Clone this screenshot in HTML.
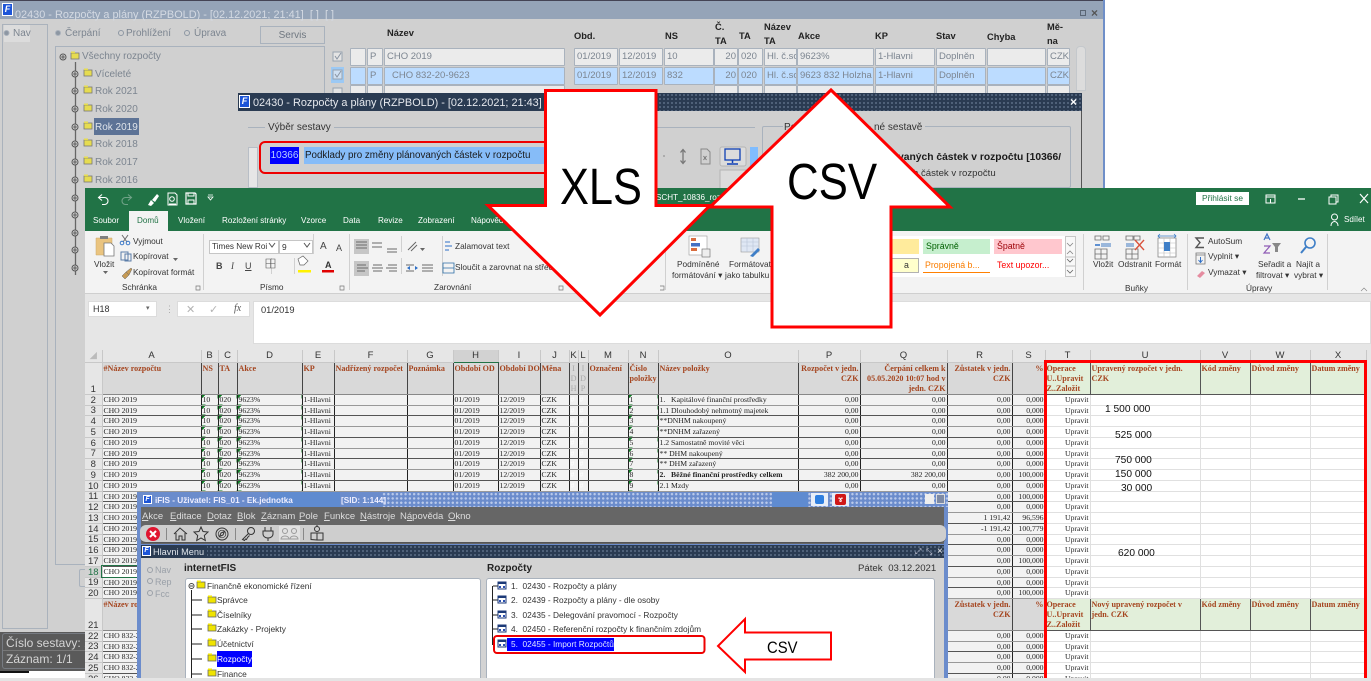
<!DOCTYPE html>
<html><head><meta charset="utf-8"><title>Rozpočty</title>
<style>
html,body{margin:0;padding:0;width:1371px;height:681px;overflow:hidden;background:#fff;font-family:"Liberation Sans",sans-serif}
a{position:absolute;white-space:nowrap;line-height:10px;font-size:9.5px;color:#222}
div{position:absolute}
svg{position:absolute;left:0;top:0;overflow:visible}
.bk a{color:#7c8590}
.bk a.h{color:#222;font-weight:bold;font-size:9.3px}
.c{background:#ebebeb;border:1px solid #a9b2bd;border-radius:1px;box-sizing:border-box;height:18px;overflow:hidden;font-size:9.5px;line-height:16px;color:#7c8590;padding-left:2px;white-space:nowrap}
.c.b{background:#bcdcff}
.dot{background-color:#2a3b52;background-image:radial-gradient(circle,#586b83 .9px,transparent 1.1px);background-size:4px 4px}
.dotb{background-color:#6b8ccc;background-image:radial-gradient(circle,#b9c9ea 1.1px,transparent 1.3px);background-size:4.3px 4.3px}
.r a{font-size:8.3px;color:#333}
.w a{color:#fff;font-size:8.1px}
table{position:absolute;left:85px;top:350px;border-collapse:collapse;table-layout:fixed;width:1281px;font:7.7px/9px "Liberation Serif",serif;color:#222}
tr{height:11px}
tr:nth-child(4n){height:10px}
tr.ch{height:12px}
tr.hd{height:31px}
tr.h2{height:32px}
th{font:9.5px/9px "Liberation Sans",sans-serif;color:#333;background:#e6e6e6;border-right:1px solid #c8c8c8;border-bottom:1px solid #c8c8c8;padding:0;text-align:center;overflow:hidden;vertical-align:bottom}
td{padding:0 1px;background-color:#f2f2f2;border-right:1px solid #222;border-bottom:1px solid #555;overflow:hidden;white-space:nowrap;vertical-align:middle}
tr:nth-child(odd) td{border-bottom-color:#999}
td:nth-child(n+17):nth-child(-n+21){text-align:right}
tr:nth-child(n) td:nth-child(n+21){background:#fff;border-color:#e0e0e0}
td:nth-child(3),td:nth-child(4),td:nth-child(5),td:nth-child(15){background-image:linear-gradient(135deg,#0a7a20 3px,transparent 3px)}
td:nth-child(12),td:nth-child(13){color:#fff}
.ch th{background:#e6e6e6;vertical-align:middle;font-size:9.5px}
.ch th.act{background:#d2d2d2;border-bottom:1px solid #217346}
.hd td,.h2 td{white-space:normal;vertical-align:top;font-weight:bold;font-size:8.1px;color:#a5451f;line-height:10px;background:#d9d9d9;background-image:none;border-bottom:1px solid #888;border-right:1px solid #444;padding-top:1px}
.hd td:nth-child(9),.hd td:nth-child(10){white-space:nowrap}
tr.hd td:nth-child(n+21),tr.h2 td:nth-child(n+21){background:#e2efda;text-align:left;border-color:#555}
.hd td:nth-child(12),.hd td:nth-child(13){color:#aaa;text-align:center;font-weight:normal}
.n{font-size:10.2px;color:#111}
.mn a{color:#ddd;font-size:9.5px;top:512px}
.tr a{font-size:8.3px;color:#333}
.tl a{font-size:8.4px;color:#333}
</style></head><body>
<div style="left:0;top:0;width:1371px;height:681px;overflow:hidden">

<!-- back window -->
<div class="bk" style="left:0;top:0;width:1105px;height:681px">
<div style="left:0;top:0;width:1105px;height:672px;background:#d0d0d0"></div>
<div style="left:0;top:0;width:1105px;height:19px;background:#95a4b8;border-top:1px solid #445;box-sizing:border-box"></div>
<div style="left:1103px;top:0;width:2px;height:188px;background:#6f8fc8"></div>
<div style="left:2px;top:3px;width:11px;height:13px;background:#1d55d8;border:1px solid #fff;box-sizing:border-box;color:#fff;font:italic bold 9px/11px 'Liberation Sans',sans-serif;text-align:center">F</div>
<a style="left:15px;top:10px;color:#d4dae3;font-size:10.9px">02430 - Rozpočty a plány (RZPBOLD) - [02.12.2021; 21:41]&nbsp; [ ]&nbsp; [ ]</a>
<div style="left:1080px;top:10px;width:6px;height:6px;border:1px solid #5a6675;box-sizing:border-box"></div><a style="left:1091px;top:8px;color:#555;font-size:12px;font-weight:bold">×</a>

<div style="left:2px;top:24px;width:46px;height:605px;border:1px solid #aab2bc;box-sizing:border-box"></div>
<div style="left:4px;top:25px;width:26px;height:17px;background:#dcdcdc"></div>
<a style="left:13px;top:29px;font-size:10px">Nav</a>
<a style="left:65px;top:29px;font-size:10px">Čerpání</a>
<a style="left:126px;top:29px;font-size:10px">Prohlížení</a>
<a style="left:194px;top:29px;font-size:10px">Úprava</a>
<div style="left:260px;top:26px;width:65px;height:18px;border:1px solid #a9b2bd;box-sizing:border-box;text-align:center;font-size:10px;line-height:17px;color:#6f7780">Servis</div>
<div style="left:55px;top:46px;width:270px;height:519px;border:1px solid #a9b2bd;box-sizing:border-box"></div>
<div style="left:94px;top:118px;width:45px;height:17px;background:#5d7396"></div>
<a style="left:82px;top:52px;font-size:10px">Všechny rozpočty</a>
<a style="left:95px;top:70px;font-size:10px">Víceleté</a>
<a style="left:95px;top:87px;font-size:10px">Rok 2021</a>
<a style="left:95px;top:105px;font-size:10px">Rok 2020</a>
<a style="left:95px;top:123px;font-size:10px;color:#dfe4ea">Rok 2019</a>
<a style="left:95px;top:140px;font-size:10px">Rok 2018</a>
<a style="left:95px;top:158px;font-size:10px">Rok 2017</a>
<a style="left:95px;top:176px;font-size:10px">Rok 2016</a>
<svg width="1105" height="300" fill="none">
<defs><g id="fd"><rect x="0" y="-3" width="8" height="6" fill="#e6dc50" stroke="#777" stroke-width=".8"/><rect x="0" y="-4.5" width="4" height="1.6" fill="#e6dc50"/></g>
<g id="pl"><circle r="3" stroke="#555" fill="#d0d0d0"/><path d="M-2 0h4M0-2v4" stroke="#444" stroke-width=".8"/></g></defs>
<circle cx="6.5" cy="33" r="2.5" fill="#8d97a3" stroke="#aab2bc"/><circle cx="58" cy="33" r="2.5" fill="#8d97a3" stroke="#aab2bc"/><circle cx="121" cy="33" r="2.5" stroke="#8d97a3"/><circle cx="187" cy="33" r="2.5" stroke="#8d97a3"/>
<path d="M75.500 62V275" stroke="#666" stroke-width="1.300"/>
<use href="#pl" x="63" y="57"/><use href="#fd" x="71" y="56"/>
<use href="#pl" x="75" y="74"/><use href="#fd" x="84" y="73"/>
<use href="#pl" x="75" y="91"/><use href="#fd" x="84" y="90"/>
<use href="#pl" x="75" y="109"/><use href="#fd" x="84" y="108"/>
<use href="#pl" x="75" y="127"/><use href="#fd" x="84" y="126"/>
<use href="#pl" x="75" y="144"/><use href="#fd" x="84" y="143"/>
<use href="#pl" x="75" y="162"/><use href="#fd" x="84" y="161"/>
<use href="#pl" x="75" y="180"/><use href="#fd" x="84" y="179"/>
<use href="#pl" x="75" y="198"/><use href="#pl" x="75" y="215"/><use href="#pl" x="75" y="233"/><use href="#pl" x="75" y="250"/><use href="#pl" x="75" y="268"/>
<rect x="333" y="52" width="9" height="9" fill="#e4e4e4" stroke="#98a3b0"/><path d="M335 56l2 3 4-6" stroke="#8a95a3"/>
<rect x="331" y="67" width="13" height="16" fill="#9cc9f4"/><rect x="333" y="70" width="9" height="9" fill="#cfe0f2" stroke="#98a3b0"/><path d="M335 74l2 3 4-6" stroke="#8a95a3"/>
<rect x="333" y="88" width="9" height="9" fill="#e4e4e4" stroke="#98a3b0"/>
</svg>
<a class="h" style="left:387px;top:28px">Název</a><a class="h" style="left:574px;top:31px">Obd.</a><a class="h" style="left:665px;top:31px">NS</a>
<a class="h" style="left:715px;top:22px">Č.</a><a class="h" style="left:715px;top:36px">TA</a><a class="h" style="left:739px;top:31px">TA</a>
<a class="h" style="left:764px;top:22px">Název</a><a class="h" style="left:764px;top:36px">TA</a><a class="h" style="left:798px;top:31px">Akce</a>
<a class="h" style="left:875px;top:31px">KP</a><a class="h" style="left:936px;top:31px">Stav</a><a class="h" style="left:987px;top:32px">Chyba</a>
<a class="h" style="left:1047px;top:22px">Mě-</a><a class="h" style="left:1047px;top:36px">na</a>

<div class="c" style="left:350px;top:48px;width:16px"></div><div class="c" style="left:367px;top:48px;width:16px">P</div><div class="c" style="left:384px;top:48px;width:181px">CHO 2019</div><div class="c" style="left:574px;top:48px;width:44px">01/2019</div><div class="c" style="left:619px;top:48px;width:44px">12/2019</div><div class="c" style="left:664px;top:48px;width:50px">10</div><div class="c" style="left:714px;top:48px;width:24px;text-align:right;padding-right:1px">20</div><div class="c" style="left:738px;top:48px;width:25px">020</div><div class="c" style="left:764px;top:48px;width:33px">Hl. č.sc</div><div class="c" style="left:797px;top:48px;width:77px">9623%</div><div class="c" style="left:875px;top:48px;width:60px">1-Hlavni</div><div class="c" style="left:936px;top:48px;width:50px">Doplněn</div><div class="c" style="left:987px;top:48px;width:59px"></div><div class="c" style="left:1047px;top:48px;width:23px">CZK</div>
<div class="c b" style="left:350px;top:67px;width:16px"></div><div class="c b" style="left:367px;top:67px;width:16px">P</div><div class="c b" style="left:384px;top:67px;width:181px;padding-left:7px">CHO 832-20-9623</div><div class="c b" style="left:574px;top:67px;width:44px">01/2019</div><div class="c b" style="left:619px;top:67px;width:44px">12/2019</div><div class="c b" style="left:664px;top:67px;width:50px">832</div><div class="c b" style="left:714px;top:67px;width:24px;text-align:right;padding-right:1px">20</div><div class="c b" style="left:738px;top:67px;width:25px">020</div><div class="c b" style="left:764px;top:67px;width:33px">Hl. č.sc</div><div class="c b" style="left:797px;top:67px;width:77px">9623 832 Holzha</div><div class="c b" style="left:875px;top:67px;width:60px">1-Hlavni</div><div class="c b" style="left:936px;top:67px;width:50px">Doplněn</div><div class="c b" style="left:987px;top:67px;width:59px"></div><div class="c b" style="left:1047px;top:67px;width:23px">CZK</div>
<div class="c" style="left:350px;top:85px;width:16px"></div><div class="c" style="left:367px;top:85px;width:16px"></div><div class="c" style="left:384px;top:85px;width:181px"></div><div class="c" style="left:714px;top:85px;width:24px"></div><div class="c" style="left:738px;top:85px;width:25px"></div><div class="c" style="left:764px;top:85px;width:33px"></div><div class="c" style="left:797px;top:85px;width:77px"></div><div class="c" style="left:875px;top:85px;width:60px"></div><div class="c" style="left:936px;top:85px;width:50px"></div><div class="c" style="left:987px;top:85px;width:59px"></div><div class="c" style="left:1047px;top:85px;width:23px"></div>
<div style="left:1076px;top:46px;width:10px;height:45px;background:#dcdcdc;border:1px solid #c4c8cc;box-sizing:border-box;border-radius:4px 4px 0 0"></div>

<!-- dialog -->
<div style="left:238px;top:93px;width:844px;height:95px;background:#d0d0d0;border-right:1px solid #555;box-sizing:border-box"></div>
<div class="dot" style="left:238px;top:93px;width:844px;height:18px"></div>
<div style="left:238px;top:93px;width:310px;height:18px;background:#2a3b52"></div>
<div style="left:239px;top:95px;width:11px;height:13px;background:#1d55d8;border:1px solid #fff;box-sizing:border-box;color:#fff;font:italic bold 9px/11px 'Liberation Sans',sans-serif;text-align:center">F</div>
<a style="left:253px;top:98px;color:#e6e9ee;font-size:10.9px">02430 - Rozpočty a plány (RZPBOLD) - [02.12.2021; 21:43]</a>
<a style="left:1070px;top:97px;color:#fff;font-size:12px;font-weight:bold">×</a>
<div style="left:248px;top:127px;width:507px;height:1px;background:#a9b2bd"></div>
<a style="left:265px;top:123px;background:#d0d0d0;padding:0 3px;color:#333;font-size:10px">Výběr sestavy</a>
<div style="left:248px;top:147px;width:10px;height:41px;background:#e6e6e6;border:1px solid #b8bec6;box-sizing:border-box"></div>
<div style="left:270px;top:147px;width:29px;height:17px;background:#0000ff;color:#b8d0ff;font-size:10px;line-height:17px;text-align:center">10366</div>
<div style="left:304px;top:147px;width:241px;height:17px;background:#86bcf8;color:#1a1a1a;font-size:9.800px;line-height:17px;text-indent:1px;white-space:nowrap">Podklady pro změny plánovaných částek v rozpočtu</div>
<div style="left:259px;top:141px;width:300px;height:33px;border:2px solid #ee0000;border-radius:6px;box-sizing:border-box"></div>
<div style="left:762px;top:126px;width:309px;height:62px;border:1px solid #a9b2bd;border-radius:2px;box-sizing:border-box"></div>
<a style="left:783px;top:123px;background:#d0d0d0;padding:0 1px;color:#333;font-size:10px">Po</a>
<a style="left:871px;top:123px;background:#d0d0d0;padding:0 3px;color:#333;font-size:10px">né sestavě</a>
<a style="left:898px;top:153px;color:#1a1a1a;font-size:10.300px;font-weight:bold;width:166px;overflow:hidden">vaných částek v rozpočtu [10366/</a>
<a style="left:913px;top:169px;color:#333;font-size:9.600px">h částek v rozpočtu</a>
<svg width="1105" height="190" fill="none">
<path d="M663 156h2" stroke="#888"/><path d="M683 150v13M680.500 152.500l2.500-3 2.500 3M680.500 160.500l2.500 3 2.500-3" stroke="#777" stroke-width="1.300"/>
<path d="M701 149h6l3 3v12h-9z" stroke="#888"/><path d="M703.500 156l3 4M706.500 156l-3 4" stroke="#777"/>
<rect x="720" y="147" width="26" height="19" rx="2" fill="#dcdcdc" stroke="#b5b5b5"/><rect x="725" y="149" width="15" height="11" stroke="#0e3fb5" stroke-width="1.300"/><path d="M732.500 160v3M727 164h11" stroke="#0e3fb5" stroke-width="1.500"/>
<rect x="750" y="147" width="8" height="19" fill="#80bdff"/>
<rect x="720" y="170" width="26" height="20" fill="#dcdcdc" stroke="#b5b5b5"/>
</svg>
</div>

<!-- left bottom status -->
<div style="left:0;top:632px;width:85px;height:39px;background:#5a5a5a"></div>
<div style="left:2px;top:633px;width:90px;height:36px;border:1px solid #777b82;border-radius:3px;box-sizing:border-box"></div>
<div style="left:3px;top:650px;width:82px;height:1px;background:#777"></div>
<a style="left:6px;top:638px;color:#d5d5d5;font-size:12px">Číslo sestavy: 10</a>
<a style="left:6px;top:654px;color:#d5d5d5;font-size:12px">Záznam: 1/1</a>
<div style="left:0;top:671px;width:85px;height:7px;background:#fff"></div>
<div style="left:0;top:671px;width:29px;height:2px;background:#111"></div>
<div style="left:79px;top:569px;width:8px;height:18px;border:1px solid #a9b2bd;border-radius:2px;box-sizing:border-box"></div>

<!-- Excel -->
<div style="left:85px;top:188px;width:1286px;height:493px;background:#e6e6e6"></div>
<div style="left:85px;top:188px;width:1286px;height:43px;background:#217346"></div>
<div style="left:129px;top:211px;width:39px;height:20px;background:#f3f3f3"></div>
<div style="left:85px;top:231px;width:1286px;height:63px;background:#f3f3f3;border-bottom:1px solid #cfcfcf;box-sizing:border-box"></div>
<div class="w">
<a style="left:656px;top:193px">SCHT_10836_rozpo</a>
<a style="left:93px;top:216px">Soubor</a><a style="left:137px;top:216px;color:#217346">Domů</a><a style="left:178px;top:216px">Vložení</a><a style="left:222px;top:216px">Rozložení stránky</a><a style="left:301px;top:216px">Vzorce</a><a style="left:343px;top:216px">Data</a><a style="left:378px;top:216px">Revize</a><a style="left:418px;top:216px">Zobrazení</a><a style="left:471px;top:216px">Nápověda</a>
<a style="left:1344px;top:215px">Sdílet</a>
</div>
<div style="left:1196px;top:192px;width:53px;height:13px;background:#fff;color:#217346;font-size:8.400px;line-height:13px;text-align:center">Přihlásit se</div>
<div class="r">
<a style="left:94px;top:259px">Vložit</a><a style="left:133px;top:236px">Vyjmout</a><a style="left:133px;top:251px">Kopírovat</a><a style="left:133px;top:267px">Kopírovat formát</a><a style="left:122px;top:282px">Schránka</a>
<a style="left:260px;top:282px">Písmo</a><a style="left:455px;top:241px">Zalamovat text</a><a style="left:455px;top:262px">Sloučit a zarovnat na střed</a><a style="left:434px;top:282px">Zarovnání</a>
<a style="left:677px;top:259px">Podmíněné</a><a style="left:672px;top:270px">formátování ▾</a><a style="left:729px;top:259px">Formátovat</a><a style="left:725px;top:270px">jako tabulku</a>
<a style="left:1093px;top:259px">Vložit</a><a style="left:1118px;top:259px">Odstranit</a><a style="left:1155px;top:259px">Formát</a><a style="left:1125px;top:283px">Buňky</a>
<a style="left:1208px;top:236px">AutoSum</a><a style="left:1208px;top:251px">Vyplnit ▾</a><a style="left:1208px;top:267px">Vymazat ▾</a><a style="left:1258px;top:259px">Seřadit a</a><a style="left:1256px;top:270px">filtrovat ▾</a><a style="left:1296px;top:259px">Najít a</a><a style="left:1294px;top:270px">vybrat ▾</a><a style="left:1246px;top:283px">Úpravy</a>
</div>
<div style="left:209px;top:240px;width:70px;height:14px;background:#fff;border:1px solid #c6c6c6;box-sizing:border-box;font-size:8.200px;line-height:12px;padding-left:2px;color:#333;white-space:nowrap;overflow:hidden">Times New Roi</div>
<div style="left:279px;top:240px;width:34px;height:14px;background:#fff;border:1px solid #c6c6c6;box-sizing:border-box;font-size:8.400px;line-height:12px;padding-left:2px;color:#333">9</div>
<a style="left:216px;top:261px;font-size:9px;font-weight:bold;color:#444">B</a><a style="left:231px;top:261px;font-size:9px;font-style:italic;color:#444;font-family:'Liberation Serif',serif">I</a><a style="left:245px;top:261px;font-size:9px;text-decoration:underline;color:#444">U</a>
<a style="left:320px;top:242px;font-size:10px;color:#444">A</a><a style="left:336px;top:243px;font-size:9px;color:#444">A</a><a style="left:325px;top:260px;font-size:9px;font-weight:bold;color:#333">A</a>
<!-- styles gallery -->
<div style="left:891px;top:236px;width:174px;height:41px;background:#fff"></div>
<div style="left:891px;top:239px;width:28px;height:15px;background:#ffeb9c"></div>
<div style="left:923px;top:239px;width:67px;height:15px;background:#c6efce;color:#006100;font-size:8.800px;line-height:15px;text-indent:3px">Správně</div>
<div style="left:994px;top:239px;width:68px;height:15px;background:#ffc7ce;color:#9c0006;font-size:8.800px;line-height:15px;text-indent:3px">Špatně</div>
<div style="left:891px;top:258px;width:28px;height:15px;background:#ffffcc;border:1px solid #b2b2b2;box-sizing:border-box;font-size:8.800px;line-height:13px;color:#333;text-indent:12px">a</div>
<div style="left:923px;top:258px;width:67px;height:15px;border-bottom:1.500px solid #ff8001;color:#fa7d00;font-size:8.800px;line-height:14px;text-indent:2px;white-space:nowrap;box-sizing:border-box">Propojená b...</div>
<div style="left:994px;top:258px;width:68px;height:15px;color:#ff0000;font-size:8.800px;line-height:14px;text-indent:3px;white-space:nowrap">Text upozor...</div>
<div style="left:1065px;top:236px;width:11px;height:41px;background:#f8f8f8;border:1px solid #c6c6c6;box-sizing:border-box"></div>
<svg width="1371" height="350" fill="none">
<!-- QAT -->
<path d="M102 194.500l-3.500 3 3.500 3M99 197.500h5.500a3.500 3.500 0 0 1 0 7H102" stroke="#fff" stroke-width="1.100"/>
<path d="M128 194.500l3.500 3-3.500 3M131 197.500h-5.500a3.500 3.500 0 0 0 0 7h2.500" stroke="#6fa287" stroke-width="1.100"/>
<path d="M148 205l3-5 3 3-3 3zM152 200l5-6 2 2-4 6" fill="#fff"/>
<path d="M168 193h7l2 2v10h-9z" stroke="#fff"/><circle cx="172" cy="199" r="2.300" stroke="#fff"/><path d="M169 204h7" stroke="#fff"/>
<path d="M186 193h9l1 1v10h-10z" stroke="#fff" stroke-width="1.200"/><path d="M188 193v3h6v-3M188 204v-4h6v4" stroke="#fff"/>
<path d="M208 197h5l-2.500 3zM208 195h5" stroke="#fff" stroke-width=".8"/>
<path d="M1266 195h9v8h-9zM1266 197h9M1270.500 199v4" stroke="#fff"/><path d="M1298 199h7" stroke="#fff" stroke-width="1.300"/><path d="M1329 197h7v7h-7zM1331 197v-2h7v7h-2" stroke="#fff"/><path d="M1360 194l8 9M1368 194l-8 9" stroke="#fff" stroke-width="1.200"/>
<circle cx="1334.500" cy="217" r="3" stroke="#fff"/><path d="M1331 226c0-6 7-6 7 0" stroke="#fff"/>
<!-- paste -->
<path d="M96 238h16v17H96z" fill="#eac47f" stroke="#caa868" stroke-width=".5"/><path d="M100 236h8v3h-8z" fill="#7f7f7f"/><path d="M104 243h7l3 3v10h-10z" fill="#fff" stroke="#777" stroke-width=".8"/>
<path d="M103 271h5l-2.500 3z" fill="#666"/>
<path d="M122 235l5 7M128 235l-5 7" stroke="#6d6d6d"/><circle cx="122" cy="243" r="1.800" stroke="#3a78c8"/><circle cx="128" cy="243" r="1.800" stroke="#3a78c8"/>
<path d="M121 252h7v8h-7zM125 254h6v7h-6z" stroke="#5b7da8" fill="#f3f3f3"/>
<path d="M122 276l4-4 3 3-4 4zM126 272l5-4 1 1-3 6" fill="#c69a54" stroke="#666" stroke-width=".5"/>
<path d="M173 258h5l-2.500 3z" fill="#666"/>
<!-- separators -->
<g stroke="#d0d0d0"><path d="M203.500 234v56M349.500 234v56M401.500 236v16M401.500 258v16M442.500 236v40M665.500 234v56M1083.500 234v56M1187.500 234v56M1327.500 234v56M271.500 258v16M294.500 258v16M313.500 234v20"/></g>
<path d="M269 243l3 4 3-4M304 243l3 4 3-4" stroke="#555"/>
<path d="M196 286h4v4h-4zM340 286h4v4h-4zM559 286h4v4h-4zM660 286h4v4h-4" stroke="#777" stroke-width=".7"/>
<path d="M266 259h9v9h-9zM270.500 259v9M266 263.500h9" stroke="#555" stroke-width=".6"/>
<!-- font colour -->
<path d="M298 259l5-3 5 5-4 4h-4z" fill="#fff" stroke="#666" stroke-width=".7"/><rect x="298" y="270" width="13" height="2.500" fill="#fff200"/><rect x="322" y="270" width="12" height="2.500" fill="#e00000"/>
<!-- align -->
<rect x="354" y="239" width="15" height="15" fill="#c6c6c6"/><rect x="354" y="261" width="15" height="15" fill="#c6c6c6"/>
<path d="M356 242h11M356 245h11M356 248h11M372 243h10M372 247h10M387 249h10M387 252h10M357 265h9M357 268h11M357 271h8M373 265h9M372 268h11M373 271h9M388 265h9M386 268h11M389 271h8M406 265h8M406 271h8M422 265h11M422 268h11M422 271h11" stroke="#6a6a6a"/>
<path d="M407 268l3-2v4zM418 268l-3-2v4z" fill="#2d6fc7"/>
<path d="M408 250l8-8M411 251l6-6" stroke="#666"/><path d="M420 248h5l-2.500 3z" fill="#666"/>
<path d="M445 242h5M445 246h7M445 250h4" stroke="#2d6fc7"/><path d="M443 263h11v10h-11zM443 268h11" stroke="#2b6ea5" stroke-width=".8"/>
<!-- cond fmt -->
<rect x="689" y="236" width="18" height="19" fill="#fff" stroke="#999" stroke-width=".6"/><rect x="691" y="238" width="5" height="3" fill="#d96d3f"/><rect x="691" y="243" width="9" height="3.500" fill="#4472c4"/><rect x="691" y="248" width="6" height="3" fill="#d96d3f"/><rect x="702" y="249" width="8" height="8" fill="#eee" stroke="#666" stroke-width=".6"/>
<rect x="741" y="238" width="18" height="14" fill="#dfe7f4" stroke="#999" stroke-width=".6"/><path d="M741 242h18M741 246h18M747 238v14M753 238v14" stroke="#b8c3d6" stroke-width=".6"/><path d="M750 256l8-8 2 2-7 7z" fill="#3f7fc7"/>
<!-- gallery scroll -->
<path d="M1067 254l3-3 3 3M1067 243l3 3 3-3" stroke="#888" stroke-width=".8"/><path d="M1066 257h9M1066 266h9" stroke="#bbb"/><path d="M1067 259l3 3 3-3M1067 270l3 3 3-3" stroke="#666" stroke-width=".8"/>
<!-- cells -->
<g stroke="#6b6b6b" stroke-width=".8"><path d="M1095 236h6v4h-6zM1103 236h6v4h-6zM1095 249h12v10h-12zM1101 249v10M1095 254h12"/></g><rect x="1101" y="243" width="10" height="4" fill="#9ab7db"/><path d="M1095 245h5" stroke="#2d6fc7" stroke-width="1.500"/>
<g stroke="#6b6b6b" stroke-width=".8"><path d="M1126 236h7v4h-7zM1134 236h6v4h-6zM1126 249h12v10h-12zM1132 249v10M1126 254h12"/></g><rect x="1126" y="243" width="8" height="4" fill="#9ab7db"/><path d="M1135 240l9 10M1144 240l-9 10" stroke="#d9523c" stroke-width="1.400"/>
<rect x="1158" y="238" width="18" height="19" fill="#fff" stroke="#777" stroke-width=".7"/><path d="M1158 243h18M1158 248h18M1158 253h18M1164 238v19M1170 238v19" stroke="#bbb" stroke-width=".6"/><rect x="1164" y="242" width="6" height="9" fill="#3f7fc7"/><path d="M1158 236h18M1160 234l-2 2 2 2M1174 234l2 2-2 2" stroke="#3f7fc7" stroke-width=".8"/>
<!-- editing -->
<path d="M1204 238h-8l4 4.500-4 5h8" stroke="#555" stroke-width="1.400"/><path d="M1196 253h9v11h-9zM1196 255h9" stroke="#777" stroke-width=".8"/><path d="M1200.500 257v5M1198.500 260l2 2.500 2-2.500" stroke="#2d6fc7"/><path d="M1197 276l5-5 3 2-5 5z" fill="#e58ca0"/>
<path d="M1264 240l3-6 3 6M1265 238h4" stroke="#4274c4" stroke-width="1.200"/><path d="M1264 246h6l-6 7h6" stroke="#8e5bb5" stroke-width="1.200"/><path d="M1272 243h9l-3 4v5h-3v-5z" fill="#888"/>
<circle cx="1310" cy="243" r="5" stroke="#3f7fc7" stroke-width="1.600"/><path d="M1306 247l-5 6" stroke="#3f7fc7" stroke-width="2"/>
<path d="M1361 291l3-3 3 3" stroke="#888" stroke-width=".7"/>
</svg>

<!-- formula bar -->
<div style="left:88px;top:301px;width:69px;height:16px;background:#fff;border:1px solid #dcdcdc;box-sizing:border-box;font-size:9px;line-height:15px;padding-left:4px;color:#333">H18<span style="position:absolute;left:57px;top:-1px;font-size:7px;color:#666">▾</span></div>
<a style="left:165px;top:304px;color:#aaa;font-size:9px">⋮</a>
<div style="left:177px;top:301px;width:73px;height:16px;background:#fff;border:1px solid #dcdcdc;box-sizing:border-box"></div>
<a style="left:186px;top:305px;color:#b3b3b3;font-size:11px">✕</a><a style="left:209px;top:305px;color:#b3b3b3;font-size:11px">✓</a><a style="left:234px;top:304px;color:#555;font-size:10px;font-style:italic;font-family:'Liberation Serif',serif">fx</a>
<div style="left:253px;top:301px;width:1118px;height:43px;background:#fff;border:1px solid #dcdcdc;box-sizing:border-box"></div>
<a style="left:261px;top:305px;font-size:9.300px;color:#333;font-family:'Liberation Sans',sans-serif">01/2019</a>

<!-- sheet -->
<table><colgroup><col style="width:17px"><col style="width:99px"><col style="width:17px"><col style="width:19px"><col style="width:65px"><col style="width:32px"><col style="width:73px"><col style="width:46px"><col style="width:45px"><col style="width:42px"><col style="width:29px"><col style="width:9px"><col style="width:10px"><col style="width:40px"><col style="width:30px"><col style="width:140px"><col style="width:62px"><col style="width:87px"><col style="width:65px"><col style="width:33px"><col style="width:45px"><col style="width:110px"><col style="width:50px"><col style="width:60px"><col style="width:56px"></colgroup>
<tr class="ch"><th style="color:#bbb">◢<th>A<th>B<th>C<th>D<th>E<th>F<th>G<th class="act">H<th>I<th>J<th>K<th>L<th>M<th>N<th>O<th>P<th>Q<th>R<th>S<th>T<th>U<th>V<th>W<th>X
<tr class="hd"><th>1<td>#Název rozpočtu<td>NS<td>TA<td>Akce<td>KP<td>Nadřízený rozpočet<td>Poznámka<td>Období OD<td>Období DO<td>Měna<td>I D H<td>I D P<td>Označení<td>Číslo položky<td>Název položky<td>Rozpočet v jedn. CZK<td>Čerpání celkem k 05.05.2020 10:07 hod v jedn. CZK<td>Zůstatek v jedn. CZK<td>%<td>Operace<br>U..Upravit<br>Z..Založit<td>Upravený rozpočet v jedn.<br>CZK<td>Kód změny<td>Důvod změny<td>Datum změny
<tr><th>2<td>CHO 2019<td>10<td>020<td>9623%<td>1-Hlavni<td><td><td>01/2019<td>12/2019<td>CZK<td>#<td>#<td><td>1<td>1.&nbsp;&nbsp; Kapitálové finanční prostředky<td>0,00<td>0,00<td>0,00<td>0,000<td>Upravit<td><td><td><td>
<tr><th>3<td>CHO 2019<td>10<td>020<td>9623%<td>1-Hlavni<td><td><td>01/2019<td>12/2019<td>CZK<td>#<td>#<td><td>2<td>1.1 Dlouhodobý nehmotný majetek<td>0,00<td>0,00<td>0,00<td>0,000<td>Upravit<td><td><td><td>
<tr><th>4<td>CHO 2019<td>10<td>020<td>9623%<td>1-Hlavni<td><td><td>01/2019<td>12/2019<td>CZK<td>#<td>#<td><td>3<td>**DNHM nakoupený<td>0,00<td>0,00<td>0,00<td>0,000<td>Upravit<td><td><td><td>
<tr><th>5<td>CHO 2019<td>10<td>020<td>9623%<td>1-Hlavni<td><td><td>01/2019<td>12/2019<td>CZK<td>#<td>#<td><td>4<td>**DNHM zařazený<td>0,00<td>0,00<td>0,00<td>0,000<td>Upravit<td><td><td><td>
<tr><th>6<td>CHO 2019<td>10<td>020<td>9623%<td>1-Hlavni<td><td><td>01/2019<td>12/2019<td>CZK<td>#<td>#<td><td>5<td>1.2 Samostatně movité věci<td>0,00<td>0,00<td>0,00<td>0,000<td>Upravit<td><td><td><td>
<tr><th>7<td>CHO 2019<td>10<td>020<td>9623%<td>1-Hlavni<td><td><td>01/2019<td>12/2019<td>CZK<td>#<td>#<td><td>6<td>** DHM nakoupený<td>0,00<td>0,00<td>0,00<td>0,000<td>Upravit<td><td><td><td>
<tr><th>8<td>CHO 2019<td>10<td>020<td>9623%<td>1-Hlavni<td><td><td>01/2019<td>12/2019<td>CZK<td>#<td>#<td><td>7<td>** DHM zařazený<td>0,00<td>0,00<td>0,00<td>0,000<td>Upravit<td><td><td><td>
<tr><th>9<td>CHO 2019<td>10<td>020<td>9623%<td>1-Hlavni<td><td><td>01/2019<td>12/2019<td>CZK<td>#<td>#<td><td>8<td><b>2.&nbsp;&nbsp; Běžné finanční prostředky celkem</b><td>382 200,00<td>382 200,00<td>0,00<td>100,000<td>Upravit<td><td><td><td>
<tr><th>10<td>CHO 2019<td>10<td>020<td>9623%<td>1-Hlavni<td><td><td>01/2019<td>12/2019<td>CZK<td>#<td>#<td><td>9<td>2.1 Mzdy<td>0,00<td>0,00<td>0,00<td>0,000<td>Upravit<td><td><td><td>
<tr><th>11<td>CHO 2019<td><td><td><td><td><td><td><td><td><td><td><td><td><td><td><td><td>0,00<td>100,000<td>Upravit<td><td><td><td>
<tr><th>12<td>CHO 2019<td><td><td><td><td><td><td><td><td><td><td><td><td><td><td><td><td>0,00<td>0,000<td>Upravit<td><td><td><td>
<tr><th>13<td>CHO 2019<td><td><td><td><td><td><td><td><td><td><td><td><td><td><td><td><td>1 191,42<td>96,596<td>Upravit<td><td><td><td>
<tr><th>14<td>CHO 2019<td><td><td><td><td><td><td><td><td><td><td><td><td><td><td><td><td>-1 191,42<td>100,779<td>Upravit<td><td><td><td>
<tr><th>15<td>CHO 2019<td><td><td><td><td><td><td><td><td><td><td><td><td><td><td><td><td>0,00<td>0,000<td>Upravit<td><td><td><td>
<tr><th>16<td>CHO 2019<td><td><td><td><td><td><td><td><td><td><td><td><td><td><td><td><td>0,00<td>0,000<td>Upravit<td><td><td><td>
<tr><th>17<td>CHO 2019<td><td><td><td><td><td><td><td><td><td><td><td><td><td><td><td><td>0,00<td>100,000<td>Upravit<td><td><td><td>
<tr><th style="color:#217346;background:#d2d2d2">18<td style="background:#fff;outline:1px solid #217346">CHO 2019<td><td><td><td><td><td><td><td><td><td><td><td><td><td><td><td><td>0,00<td>0,000<td>Upravit<td><td><td><td>
<tr><th>19<td>CHO 2019<td><td><td><td><td><td><td><td><td><td><td><td><td><td><td><td><td>0,00<td>0,000<td>Upravit<td><td><td><td>
<tr><th>20<td>CHO 2019<td><td><td><td><td><td><td><td><td><td><td><td><td><td><td><td><td>0,00<td>100,000<td>Upravit<td><td><td><td>
<tr class="h2"><th>21<td>#Název rozpočtu<td><td><td><td><td><td><td><td><td><td><td><td><td><td><td><td><td>Zůstatek v jedn. CZK<td>%<td>Operace<br>U..Upravit<br>Z..Založit<td>Nový upravený rozpočet v jedn. CZK<td>Kód změny<td>Důvod změny<td>Datum změny
<tr><th>22<td>CHO 832-20-9623<td><td><td><td><td><td><td><td><td><td><td><td><td><td><td><td><td>0,00<td>0,000<td>Upravit<td><td><td><td>
<tr><th>23<td>CHO 832-20-9623<td><td><td><td><td><td><td><td><td><td><td><td><td><td><td><td><td>0,00<td>0,000<td>Upravit<td><td><td><td>
<tr><th>24<td>CHO 832-20-9623<td><td><td><td><td><td><td><td><td><td><td><td><td><td><td><td><td>0,00<td>0,000<td>Upravit<td><td><td><td>
<tr><th>25<td>CHO 832-20-9623<td><td><td><td><td><td><td><td><td><td><td><td><td><td><td><td><td>0,00<td>0,000<td>Upravit<td><td><td><td>
<tr><th>26<td>CHO 832-20-9623<td><td><td><td><td><td><td><td><td><td><td><td><td><td><td><td><td>0,00<td>0,000<td>Upravit<td><td><td><td>
</table>

<a class="n" style="left:1105px;top:405px">1 500 000</a>
<a class="n" style="left:1115px;top:431px">525 000</a>
<a class="n" style="left:1115px;top:456px">750 000</a>
<a class="n" style="left:1115px;top:470px">150 000</a>
<a class="n" style="left:1121px;top:484px">30 000</a>
<a class="n" style="left:1118px;top:549px">620 000</a>
<div style="left:1044px;top:360px;width:323px;height:321px;border:3px solid #f00;border-bottom:0;box-sizing:border-box"></div>

<!-- iFIS window -->
<div style="left:137px;top:492px;width:811px;height:189px;background:#6b8ccc"></div>
<div class="dotb" style="left:137px;top:492px;width:811px;height:15px"></div>
<div style="left:137px;top:492px;width:244px;height:15px;background:#6b8ccc"></div>
<div style="left:268px;top:492px;width:72px;height:15px;background:#5f8bd0"></div>
<div style="left:772px;top:492px;width:36px;height:15px;background:#5f8bd0"></div>
<div style="left:143px;top:495px;width:9px;height:9px;background:#1d55d8;border:1px solid #fff;box-sizing:border-box;color:#fff;font:italic bold 7px/7px 'Liberation Sans',sans-serif;text-align:center">F</div>
<a style="left:155px;top:496px;color:#eef;font-size:8.200px;font-weight:bold">iFIS - Uživatel: FIS_01 - Ek.jednotka</a>
<a style="left:341px;top:496px;color:#eef;font-size:8.200px;font-weight:bold">[SID: 1:144]</a>
<div style="left:811px;top:493px;width:17px;height:13px;background:#e8eef8"></div><div style="left:815px;top:495px;width:9px;height:9px;background:#2f7fe0;border-radius:2px"></div>
<div style="left:832px;top:493px;width:17px;height:13px;background:#e8eef8"></div><div style="left:835px;top:494px;width:11px;height:11px;background:#d01818;border-radius:2px;color:#fff;font:bold 8px/11px 'Liberation Sans',sans-serif;text-align:center">ɤ</div>
<div style="left:925px;top:494px;width:9px;height:10px;background:#eee"></div>
<div style="left:936px;top:494px;width:9px;height:10px;background:#7d8aa5;border:1px solid #ddd;box-sizing:border-box"></div>
<div style="left:141px;top:507px;width:803px;height:18px;background:#666"></div>
<div class="mn">
<a style="left:142px"><u>A</u>kce</a><a style="left:170px"><u>E</u>ditace</a><a style="left:207px"><u>D</u>otaz</a><a style="left:237px"><u>B</u>lok</a><a style="left:261px"><u>Z</u>áznam</a><a style="left:299px"><u>P</u>ole</a><a style="left:324px"><u>F</u>unkce</a><a style="left:360px"><u>N</u>ástroje</a><a style="left:400px">N<u>á</u>pověda</a><a style="left:448px"><u>O</u>kno</a>
</div>
<div style="left:141px;top:525px;width:803px;height:19px;background:#666"></div>
<div style="left:140px;top:525px;width:806px;height:18px;background:#cecece;border-radius:6px;box-sizing:border-box;border-bottom:1px solid #555"></div>
<svg width="1371" height="681" fill="none">
<circle cx="153" cy="534" r="7" fill="#e01530"/><path d="M150 531l6 6M156 531l-6 6" stroke="#fff" stroke-width="2"/>
<g stroke="#888"><path d="M166.500 528v12M235.500 528v12M303.500 528v12"/></g>
<g stroke="#333" stroke-width="1"><path d="M174 534l6-6 7 6M176 533v7h3v-4h3v4h3v-7"/><path d="M201 527l2 4.500 5 .5-3.700 3.500 1 5-4.300-2.500-4.300 2.500 1-5-3.700-3.500 5-.5z"/><circle cx="222" cy="534" r="6"/><circle cx="222" cy="534" r="3.800" stroke-width=".7"/><path d="M219.500 536.500l1.500-3.500 3.500-1.500-1.500 3.500z"/>
<circle cx="251" cy="531" r="3.500"/><path d="M248.500 533.500l-6 6 2 1 1-1.500 1 .5 1-2 2-2"/><path d="M265 527v4M271 527v4M263 531h10v3a5 4 0 0 1-10 0zM268 538v3"/><path d="M311 533h12v7h-6l-6-.5zM317 533v7"/><circle cx="317" cy="529" r="2.500"/><path d="M317 525v1"/></g>
<rect x="279" y="526" width="21" height="16" fill="#e2e2e2"/><g stroke="#9a9a9a"><circle cx="285" cy="531" r="2.500"/><circle cx="294" cy="531" r="2.500"/><path d="M281 539c0-4 8-4 8 0zM290 539c0-4 8-4 8 0z"/></g>
</svg>
<div class="dot" style="left:141px;top:545px;width:803px;height:13px"></div>
<div style="left:141px;top:545px;width:66px;height:13px;background:#2a3b52"></div>
<div style="left:142px;top:546px;width:9px;height:10px;background:#1d55d8;border:1px solid #fff;box-sizing:border-box;color:#fff;font:italic bold 7px/8px 'Liberation Sans',sans-serif;text-align:center">F</div>
<a style="left:153px;top:547px;color:#dfe4ea;font-size:9.200px">Hlavni Menu</a>
<a style="left:915px;top:547px;color:#ccd;font-size:8px">⤢</a><a style="left:926px;top:547px;color:#ccd;font-size:8px">⤡</a><a style="left:937px;top:547px;color:#eee;font-size:10px">×</a>
<div style="left:141px;top:558px;width:803px;height:123px;background:#d3d3d3"></div>
<a style="left:155px;top:565px;color:#9aa0a8;font-size:9px">Nav</a><a style="left:155px;top:577px;color:#9aa0a8;font-size:9px">Rep</a><a style="left:155px;top:589px;color:#9aa0a8;font-size:9px">Fcc</a>
<a style="left:184px;top:564px;font-size:10px;font-weight:bold;color:#222">internetFIS</a>
<a style="left:487px;top:564px;font-size:10px;font-weight:bold;color:#222">Rozpočty</a>
<a style="left:858px;top:564px;font-size:9.600px;color:#333;word-spacing:3px">Pátek 03.12.2021</a>
<div style="left:185px;top:578px;width:296px;height:103px;background:#fff;border:1px solid #a9b2bd;border-radius:3px;box-sizing:border-box"></div>
<div style="left:486px;top:578px;width:449px;height:103px;background:#fff;border:1px solid #a9b2bd;border-radius:3px;box-sizing:border-box"></div>
<div style="left:217px;top:651px;width:35px;height:16px;background:#0000ff"></div>
<div style="left:507px;top:638px;width:107px;height:13px;background:#0000ff"></div>
<div class="tl">
<a style="left:207px;top:581px">Finančně ekonomické řízení</a><a style="left:217px;top:595px">Správce</a><a style="left:217px;top:610px">Číselníky</a><a style="left:217px;top:624px">Zakázky - Projekty</a><a style="left:217px;top:639px">Účetnictví</a><a style="left:217px;top:654px;color:#fff">Rozpočty</a><a style="left:217px;top:669px">Finance</a>
</div>
<div class="tr">
<a style="left:511px;top:581px">1.&nbsp; 02430 - Rozpočty a plány</a><a style="left:511px;top:595px">2.&nbsp; 02439 - Rozpočty a plány - dle osoby</a><a style="left:511px;top:610px">3.&nbsp; 02435 - Delegování pravomocí - Rozpočty</a><a style="left:511px;top:624px">4.&nbsp; 02450 - Referenční rozpočty k finančním zdojům</a><a style="left:511px;top:639px;color:#dfe6ff">5.&nbsp; 02455 - Import Rozpočtů</a>
</div>
<svg width="1371" height="681" fill="none">
<defs><g id="fy"><rect x="0" y="-3" width="8" height="6" fill="#f0e400" stroke="#666" stroke-width=".8"/><rect x="0" y="-4.500" width="4" height="1.600" fill="#f0e400"/></g>
<g id="ic"><rect x="0" y="-4" width="8" height="7" fill="#fff" stroke="#1c3a78"/><rect x="0" y="-4" width="8" height="2" fill="#1c3a78"/><rect x="1" y="0" width="2" height="2" fill="#2a4fb0"/><rect x="5" y="0" width="2" height="2" fill="#2a4fb0"/></g></defs>
<circle cx="150" cy="570" r="2.500" stroke="#9aa0a8"/><circle cx="150" cy="581" r="2.500" stroke="#9aa0a8"/><circle cx="150" cy="593" r="2.500" stroke="#9aa0a8"/>
<path d="M191.500 590V678M192 600h10M192 615h10M192 629h10M192 644h10M192 659h10M192 674h10" stroke="#222"/>
<circle cx="191.500" cy="586" r="2.500" stroke="#444" fill="#fff"/><path d="M190 586h3" stroke="#444"/>
<use href="#fy" x="197" y="585"/><use href="#fy" x="208" y="600"/><use href="#fy" x="208" y="614"/><use href="#fy" x="208" y="628"/><use href="#fy" x="208" y="643"/><use href="#fy" x="208" y="658"/><use href="#fy" x="208" y="673"/>
<path d="M492.500 586V645M493 586h5M493 600h5M493 615h5M493 629h5" stroke="#222"/>
<use href="#ic" x="498" y="586"/><use href="#ic" x="498" y="600"/><use href="#ic" x="498" y="615"/><use href="#ic" x="498" y="629"/><use href="#ic" x="498" y="644"/>
<rect x="494" y="636" width="210.500" height="17" rx="3" stroke="#ee0000" stroke-width="2"/>
<!-- big arrows -->
<path d="M545.500 90.500H656V205.500H710L600 315 488 205.500H545.500Z" fill="#fff" stroke="#f00" stroke-width="3"/>
<path d="M831 90 950 207H891V327H772V207H710Z" fill="#fff" stroke="#f00" stroke-width="3"/>
<path d="M745 619V632.500H831V659.500H745V672L718 646Z" fill="#fff" stroke="#f00" stroke-width="2"/>
</svg>
<a style="left:560px;top:164px;font-size:51px;line-height:46px;color:#000;transform:scaleX(.85);transform-origin:left top">XLS</a>
<a style="left:787px;top:159px;font-size:51px;line-height:46px;color:#000;transform:scaleX(.86);transform-origin:left top">CSV</a>
<a style="left:767px;top:641px;font-size:16.500px;line-height:14px;color:#000;transform:scaleX(.9);transform-origin:left top">CSV</a>
<div style="left:0;top:678px;width:1371px;height:3px;background:#e4e4e4"></div>
</div>
</body></html>
